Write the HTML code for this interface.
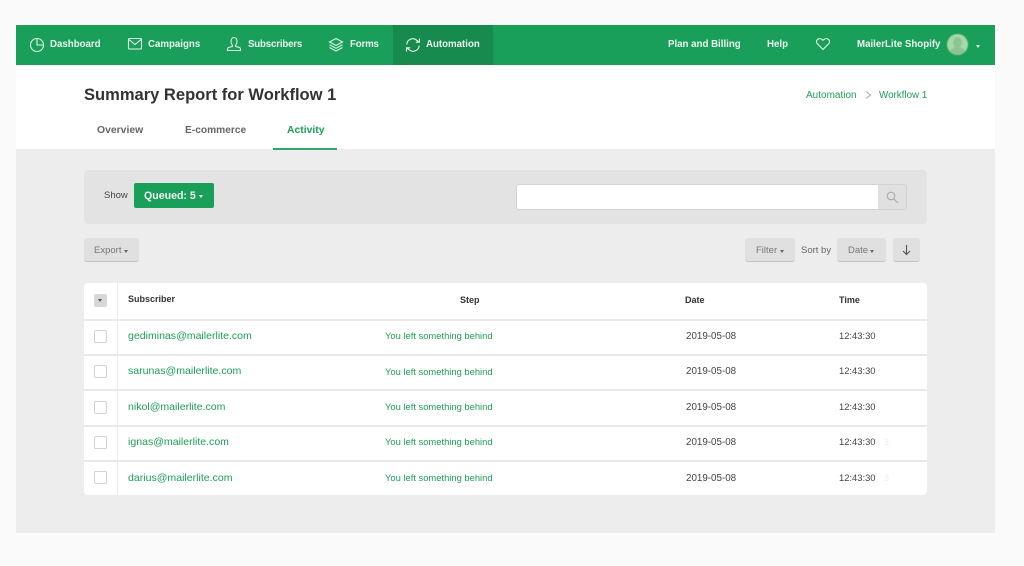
<!DOCTYPE html>
<html><head><meta charset="utf-8"><style>
html,body{margin:0;padding:0}
body{width:1024px;height:566px;background:#fafafa;position:relative;overflow:hidden;font-family:"Liberation Sans",sans-serif}
.b{position:absolute}
.t{position:absolute;white-space:nowrap;line-height:14px;filter:blur(.35px)}
.n{color:#e9f7ef;font-size:9.700px;font-weight:700;top:38px}
.g{color:#1f9d59;font-size:10px}
.d{color:#444;font-size:9.800px}
.tm{color:#444;font-size:9.400px}
.h{color:#333;font-size:9px;font-weight:700}
.btn{position:absolute;background:#e0e0e0;border-bottom:1px solid #c4c4c4;border-radius:3px;box-sizing:border-box}
.cb{position:absolute;left:94px;width:13px;height:13px;box-sizing:border-box;background:#fff;border:1.500px solid #d2d2d2;border-radius:2px}
.line{position:absolute;left:84px;width:843px;height:2px;background:#e9e9e9}
.car{position:absolute;width:0;height:0;border-left:2.500px solid transparent;border-right:2.500px solid transparent;border-top:3px solid #666;filter:blur(.2px)}
svg{position:absolute;fill:none;stroke:#e0f3e8;stroke-width:1.100;filter:blur(.25px)}
</style></head><body>
<div class="b" style="left:16px;top:25px;width:979px;height:508px;background:#ededed"></div>
<div class="b" style="left:16px;top:65px;width:979px;height:84px;background:#fff"></div>
<div class="b" style="left:16px;top:25px;width:979px;height:40px;background:#1a9f5a"></div>
<div class="b" style="left:393px;top:25px;width:100px;height:40px;background:#178a4e"></div>

<svg style="left:29px;top:37px" width="16" height="16" viewBox="0 0 16 16"><circle cx="8" cy="8" r="6.500"/><path d="M8 1.500V8H14.500"/></svg>
<span class="t n" style="left:50px">Dashboard</span>
<svg style="left:127px;top:37px" width="16" height="14" viewBox="0 0 16 14"><rect x="1.500" y="1.500" width="13" height="10.500" rx="1"/><path d="M2 2.500L8 7.500L14 2.500"/></svg>
<span class="t n" style="left:148px">Campaigns</span>
<svg style="left:226px;top:36px" width="16" height="16" viewBox="0 0 16 16"><path d="M5 5.500C5 3 6.300 1.500 8 1.500S11 3 11 5.500S9.700 9 9.500 9.500L9.800 10.500L13.500 11.500C14.500 11.800 14.500 12.800 14.500 14.500H1.500C1.500 12.800 1.500 11.800 2.500 11.500L6.200 10.500L6.500 9.500C6.300 9 5 8 5 5.500Z"/></svg>
<span class="t n" style="left:248px;letter-spacing:-.17px">Subscribers</span>
<svg style="left:328px;top:37px" width="16" height="16" viewBox="0 0 16 16"><path d="M8 1.500L14.500 5L8 8.500L1.500 5Z"/><path d="M1.500 7.800L8 11.300L14.500 7.800"/><path d="M1.500 10.500L8 14L14.500 10.500"/></svg>
<span class="t n" style="left:350px;letter-spacing:-.17px">Forms</span>
<svg style="left:405px;top:37px" width="16" height="16" viewBox="0 0 16 16"><path d="M1.800 7.500A6 6 0 0 1 12 3.500L14 5"/><path d="M14.500 1.500V5.200H10.800"/><path d="M14.200 8.500A6 6 0 0 1 4 12.500L2 11"/><path d="M1.500 14.500V10.800H5.200"/></svg>
<span class="t n" style="left:426px">Automation</span>

<span class="t n" style="left:668px">Plan and Billing</span>
<span class="t n" style="left:767px">Help</span>
<svg style="left:815px;top:37px" width="16" height="14" viewBox="0 0 16 14"><path d="M8 12.500L2.200 6.600C-.5 3.200 4.500-.5 8 3.300C11.500-.5 16.500 3.200 13.800 6.600Z"/></svg>
<span class="t n" style="left:857px">MailerLite Shopify</span>
<div class="b" style="left:947px;top:34px;width:21px;height:21px;border-radius:50%;background:#a8d8a8;overflow:hidden;filter:blur(.4px)"><div class="b" style="left:6px;top:3px;width:9px;height:11px;border-radius:50%;background:#8cc593"></div><div class="b" style="left:3px;top:13px;width:15px;height:10px;border-radius:50%;background:#8cc593"></div></div>
<div class="car" style="left:976px;top:45px;border-top-color:#e6f5ec"></div>

<span class="t" style="left:84px;top:85px;font-size:16.550px;line-height:20px;font-weight:700;color:#333">Summary Report for Workflow 1</span>
<span class="t g" style="left:806px;top:89px">Automation</span>
<svg style="left:865px;top:91px;stroke:#aaa" width="7" height="8" viewBox="0 0 7 8"><path d="M1 .5L5.500 4L1 7.500"/></svg>
<span class="t g" style="left:879px;top:89px;font-size:9.800px">Workflow 1</span>
<span class="t" style="left:97px;top:124px;font-size:10.400px;font-weight:700;color:#666">Overview</span>
<span class="t" style="left:185px;top:124px;font-size:10.200px;font-weight:700;color:#666">E-commerce</span>
<span class="t" style="left:287px;top:124px;font-size:10.400px;font-weight:700;color:#1f9d59">Activity</span>
<div class="b" style="left:273px;top:148px;width:64px;height:2px;background:#2fa86a"></div>

<div class="b" style="left:84px;top:170px;width:843px;height:54px;background:#e3e3e3;border-radius:4px"></div>
<span class="t" style="left:104px;top:189px;font-size:9.500px;color:#444">Show</span>
<div class="b" style="left:134px;top:183px;width:80px;height:25px;background:#1a9f5a;border-radius:2px"></div>
<span class="t" style="left:144px;top:189px;font-size:10.600px;font-weight:700;color:#eef8f2">Queued: 5</span>
<div class="car" style="left:198.500px;top:195px;border-top-color:#eef8f2"></div>
<div class="b" style="left:516px;top:184px;width:391px;height:26px;box-sizing:border-box;background:#e0e0e0;border:1.500px solid #d2d2d2;border-radius:3px"></div>
<div class="b" style="left:517px;top:185px;width:361px;height:24px;background:#fff;border-radius:2px 0 0 2px"></div>
<svg style="left:886px;top:191px;stroke:#aaa" width="13" height="13" viewBox="0 0 13 13"><circle cx="5" cy="5" r="3.800"/><path d="M8 8L12 12"/></svg>

<div class="btn" style="left:84px;top:238px;width:55px;height:24px"></div>
<span class="t" style="left:94px;top:244px;font-size:9.500px;color:#777">Export</span>
<div class="car" style="left:124px;top:250px"></div>
<div class="btn" style="left:745px;top:238px;width:50px;height:24px"></div>
<span class="t" style="left:756px;top:244px;font-size:9.500px;color:#777">Filter</span>
<div class="car" style="left:780px;top:250px"></div>
<span class="t" style="left:801px;top:244px;font-size:9.500px;color:#666">Sort by</span>
<div class="btn" style="left:837px;top:238px;width:49px;height:24px"></div>
<span class="t" style="left:848px;top:244px;font-size:9.500px;color:#777">Date</span>
<div class="car" style="left:870px;top:250px"></div>
<div class="btn" style="left:893px;top:238px;width:27px;height:24px"></div>
<svg style="left:901px;top:244px;stroke:#555" width="11" height="12" viewBox="0 0 11 12"><path d="M5.500 1V10.500M2 7L5.500 10.500L9 7"/></svg>

<div class="b" style="left:84px;top:283px;width:843px;height:212px;background:#fff;border-radius:4px"></div>
<div class="b" style="left:117px;top:283px;width:1px;height:212px;background:#ececec"></div>
<div class="line" style="top:319px"></div>
<div class="line" style="top:354px"></div>
<div class="line" style="top:389px"></div>
<div class="line" style="top:425px"></div>
<div class="line" style="top:460px"></div>

<div class="b" style="left:94px;top:294px;width:13px;height:13px;background:#d8d8d8;border-radius:2px"></div>
<div class="car" style="left:98px;top:299px;border-top-color:#555"></div>
<span class="t h" style="left:128px;top:292px">Subscriber</span>
<span class="t h" style="left:460px;top:293px">Step</span>
<span class="t h" style="left:685px;top:293px">Date</span>
<span class="t h" style="left:839px;top:293px">Time</span>

<div class="cb" style="top:330px"></div>
<span class="t g" style="left:128px;top:329px;font-size:10.550px">gediminas@mailerlite.com</span>
<span class="t g" style="left:385px;top:329px;font-size:9.400px">You left something behind</span>
<span class="t d" style="left:686px;top:330px">2019-05-08</span>
<span class="t tm" style="left:839px;top:329px">12:43:30</span>

<div class="cb" style="top:365px"></div>
<span class="t g" style="left:128px;top:364px;font-size:10.550px">sarunas@mailerlite.com</span>
<span class="t g" style="left:385px;top:365px;font-size:9.400px">You left something behind</span>
<span class="t d" style="left:686px;top:365px">2019-05-08</span>
<span class="t tm" style="left:839px;top:364px">12:43:30</span>

<div class="cb" style="top:401px"></div>
<span class="t g" style="left:128px;top:400px;font-size:10.550px">nikol@mailerlite.com</span>
<span class="t g" style="left:385px;top:400px;font-size:9.400px">You left something behind</span>
<span class="t d" style="left:686px;top:401px">2019-05-08</span>
<span class="t tm" style="left:839px;top:400px">12:43:30</span>

<div class="cb" style="top:436px"></div>
<span class="t g" style="left:128px;top:435px;font-size:10.550px">ignas@mailerlite.com</span>
<span class="t g" style="left:385px;top:435px;font-size:9.400px">You left something behind</span>
<span class="t d" style="left:686px;top:436px">2019-05-08</span>
<span class="t tm" style="left:839px;top:435px">12:43:30</span>
<span class="t" style="left:884px;top:435px;font-size:9px;color:#eee">3</span>

<div class="cb" style="top:471px"></div>
<span class="t g" style="left:128px;top:471px;font-size:10.550px">darius@mailerlite.com</span>
<span class="t g" style="left:385px;top:471px;font-size:9.400px">You left something behind</span>
<span class="t d" style="left:686px;top:472px">2019-05-08</span>
<span class="t tm" style="left:839px;top:471px">12:43:30</span>
<span class="t" style="left:884px;top:471px;font-size:9px;color:#eee">3</span>
</body></html>
